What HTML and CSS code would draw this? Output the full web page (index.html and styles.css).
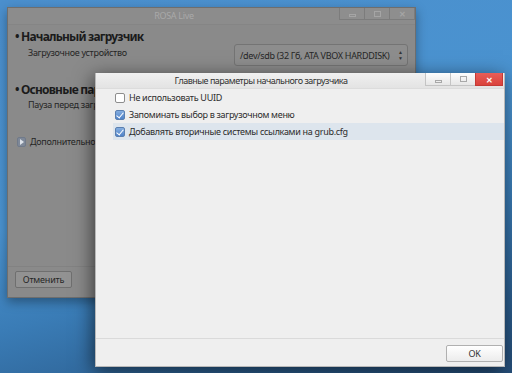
FILE: index.html
```html
<!DOCTYPE html>
<html lang="ru">
<head>
  <meta charset="UTF-8">
  <title>ROSA Live</title>
  <link rel="stylesheet" href="styles.css">
</head>
<body>
  <div class="desktop">

    <!-- background installer window (inactive) -->
    <div class="win back">
      <div class="titlebar">
        <span class="title">ROSA Live</span>
        <div class="wbtns">
          <span class="wbtn"><i class="ic-min"></i></span>
          <span class="wbtn"><i class="ic-max"></i></span>
          <span class="wbtn"><i class="ic-x">&#x2715;</i></span>
        </div>
      </div>
      <div class="body">
        <h3>&bull; Начальный загрузчик</h3>
        <div class="row">
          <span class="lbl">Загрузочное устройство</span>
          <span class="combo">/dev/sdb (32 Гб, ATA VBOX HARDDISK)<span class="spin">&#9650;<br>&#9660;</span></span>
        </div>
        <h3 class="h2">&bull; Основные параметры</h3>
        <div class="lbl sub">Пауза перед загрузкой</div>
        <div class="expander"><span class="exp-ic"></span>Дополнительно</div>
        <div class="spacer"></div>
        <div class="foot">
          <button class="btn">Отменить</button>
        </div>
      </div>
    </div>

    <!-- bootloader options dialog -->
    <div class="win dlg">
      <div class="titlebar">
        <span class="title">Главные параметры начального загрузчика</span>
        <div class="wbtns">
          <span class="wbtn"><i class="ic-min"></i></span>
          <span class="wbtn"><i class="ic-max"></i></span>
          <span class="wbtn close"><i class="ic-x">&#x2715;</i></span>
        </div>
      </div>
      <div class="body">
        <label class="opt"><span class="cb"></span>Не использовать UUID</label>
        <label class="opt"><span class="cb on"></span>Запоминать выбор в загрузочном меню</label>
        <label class="opt hl"><span class="cb on"></span>Добавлять вторичные системы ссылками на grub.cfg</label>
        <div class="spacer"></div>
        <div class="foot">
          <button class="btn ok">OK</button>
        </div>
      </div>
    </div>

  </div>
</body>
</html>
```

FILE: styles.css
```css
* {
  box-sizing: border-box;
}

body {
  margin: 0;
  font-family: "Noto Sans", "Open Sans", sans-serif;
  font-size: 9px;
  letter-spacing: -0.3px;
  overflow: hidden;
}

.desktop {
  position: relative;
  width: 512px;
  height: 373px;
  background: linear-gradient(165deg, #4b8fcd 0%, #4a93d0 45%, #3a7cb6 65%, #2c5f90 85%, #264f7a 100%);
}

.win {
  position: absolute;
  display: flex;
  flex-direction: column;
}

/* ---- inactive window ---- */
.back {
  left: 7px;
  top: 7px;
  width: 409px;
  height: 291px;
  background: #8a8a8a;
  border: 1px solid #6e6e6e;
  box-shadow: 0 4px 10px rgba(0, 0, 0, 0.35);
  color: #262626;
}

.titlebar {
  display: flex;
  align-items: flex-start;
  height: 17px;
  flex: none;
}

.back .titlebar {
  background: #8c8c8c;
  border-bottom: 1px solid #858585;
}

.title {
  flex: 1;
  text-align: center;
  line-height: 16px;
  font-size: 9px;
}

.back .title {
  color: #a9a9a9;
}

.wbtns {
  display: flex;
}

.wbtn {
  width: 26px;
  height: 12px;
  display: flex;
  align-items: center;
  justify-content: center;
  position: relative;
}

.back .wbtn {
  border: 1px solid #7c7c7c;
  border-top: none;
  margin-left: -1px;
  background: #8e8e8e;
  color: #a5a5a5;
}

.ic-min {
  width: 7px;
  height: 3px;
  border: 1px solid currentColor;
  margin-top: 4px;
}

.ic-max {
  width: 7px;
  height: 6px;
  border: 1px solid currentColor;
}

.ic-x {
  font-style: normal;
  font-size: 8px;
  line-height: 9px;
  font-weight: bold;
}

.body {
  flex: 1;
  display: flex;
  flex-direction: column;
}

.back .body {
  padding: 3px 7px 0 7px;
}

h3 {
  margin: 0;
  font-size: 12px;
  letter-spacing: -0.8px;
  line-height: 18px;
  font-weight: bold;
  color: #1b1b1b;
}

.h2 {
  margin-top: 15px;
}

.row {
  display: flex;
  justify-content: space-between;
  align-items: flex-start;
  margin-top: -2px;
}

.lbl {
  line-height: 14px;
  padding-left: 13px;
  padding-top: 2px;
}

.sub {
  margin-top: -3px;
}

.combo {
  width: 174px;
  height: 22px;
  border: 1px solid #747474;
  border-radius: 3px;
  background: #8d8d8d;
  display: flex;
  align-items: center;
  justify-content: space-between;
  padding: 0 4px 0 5px;
  color: #262626;
}

.spin {
  font-size: 5px;
  line-height: 6px;
  letter-spacing: 0;
  text-align: center;
  color: #333;
}

.expander {
  display: flex;
  align-items: center;
  margin-top: 23px;
  padding-left: 2px;
  line-height: 14px;
}

.exp-ic {
  width: 9px;
  height: 10px;
  border: 1px solid #707a8a;
  border-radius: 2px;
  background: #7e8898;
  margin-right: 4px;
  position: relative;
}

.exp-ic::after {
  content: "";
  position: absolute;
  left: 2px;
  top: 1px;
  border-left: 4px solid #dde2ea;
  border-top: 3px solid transparent;
  border-bottom: 3px solid transparent;
}

.spacer {
  flex: 1;
}

.back .foot {
  border-top: 1px solid #828282;
  margin: 0 -7px 0 -7px;
  padding: 4px 7px 9px 7px;
}

.btn {
  font-family: inherit;
  font-size: 9px;
  letter-spacing: -0.2px;
  height: 17px;
  padding: 0 4px;
  border-radius: 2px;
}

.back .btn {
  width: 57px;
  border: 1px solid #6f6f6f;
  background: #929292;
  color: #262626;
}

/* ---- active dialog ---- */
.dlg {
  left: 95px;
  top: 73px;
  width: 410px;
  height: 294px;
  background: #efefef;
  border: 1px solid #b8b8b8;
  border-top: none;
  box-shadow: -2px 4px 18px rgba(0, 0, 0, 0.6);
  color: #2c2c2c;
}

.dlg .titlebar {
  background: linear-gradient(#f0f0f0, #e3e3e3);
  border-bottom: 1px solid #dcdcdc;
  height: 16px;
}

.dlg .title {
  color: #333;
  letter-spacing: -0.5px;
}

.dlg .wbtns {
  margin-right: 1px;
}

.dlg .wbtn {
  height: 13px;
  background: linear-gradient(#fdfdfd, #e6e6e6);
  border: 1px solid #c4c4c4;
  border-top: none;
  margin-left: -1px;
  color: #a8a8a8;
}

.dlg .wbtn.close {
  width: 28px;
  background: linear-gradient(#e85e58, #da423c);
  border-color: #c43a35;
  color: #fff;
}

.dlg .body {
  padding: 0;
}

.opt {
  display: flex;
  align-items: center;
  height: 17px;
  padding-left: 19px;
}

.opt.hl {
  margin-left: 17px;
  padding-left: 2px;
  background: #dde5ed;
}

.cb {
  width: 10px;
  height: 10px;
  border: 1px solid #8d8d8d;
  border-radius: 2px;
  background: #fff;
  margin-right: 4px;
  position: relative;
  flex: none;
}

.cb.on {
  border-color: #5a7fb0;
  background: linear-gradient(#85aee0, #4f82c8);
}

.cb.on::after {
  content: "";
  position: absolute;
  left: 2px;
  top: 0px;
  width: 3px;
  height: 6px;
  border-right: 1.5px solid #fff;
  border-bottom: 1.5px solid #fff;
  transform: rotate(40deg);
}

.dlg .foot {
  border-top: 1px solid #dadada;
  display: flex;
  justify-content: flex-end;
  padding: 6px 1px 4px 0;
}

.ok {
  width: 57px;
  border: 1px solid #b0b0b0;
  background: linear-gradient(#ffffff, #ececec);
  color: #333;
}
```
